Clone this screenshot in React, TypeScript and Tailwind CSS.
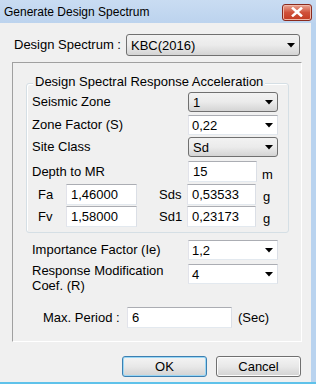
import React from 'react';

function Arrow() {
  return (
    <svg width="8" height="5" viewBox="0 0 8 5" className="shrink-0">
      <polygon points="0,0 8,0 4,4.5" fill="#000" />
    </svg>
  );
}

// gray "drop-down list" style combo
function ListCombo({ value, className }: { value: string; className: string }) {
  return (
    <div
      className={`flex items-center justify-between rounded-[3px] border border-[#707070] bg-gradient-to-b from-[#f2f2f2] via-[#ebebeb] to-[#d4d4d4] pl-[4px] pr-[4px] ${className}`}
    >
      <span className="leading-none">{value}</span>
      <Arrow />
    </div>
  );
}

// white editable combo
function EditCombo({ value }: { value: string }) {
  return (
    <div className="flex h-[20px] w-[90px] shrink-0 items-center justify-between border border-[#abadb3] border-b-[#e3e9ef] border-l-[#e2e3ea] border-r-[#dbdfe6] bg-white pl-[3px] pr-[4px]">
      <span className="leading-none">{value}</span>
      <Arrow />
    </div>
  );
}

function TextBox({ value, className }: { value: string; className: string }) {
  return (
    <div
      className={`flex h-[21px] items-center border border-[#abadb3] border-b-[#e3e9ef] border-l-[#e2e3ea] border-r-[#dbdfe6] bg-white pl-[4px] ${className}`}
    >
      <span className="leading-none">{value}</span>
    </div>
  );
}

function Button({ label, primary }: { label: string; primary?: boolean }) {
  return (
    <div
      className={`flex h-[21px] w-[85px] items-center justify-center rounded-[3px] border bg-gradient-to-b from-[#f4f4f4] via-[#e8e8e8] to-[#d2d2d2] ${
        primary ? 'border-[#3c7fb1] shadow-[inset_0_0_0_1px_#9ad7f5]' : 'border-[#707070] shadow-[inset_0_0_0_1px_#fcfcfc]'
      }`}
    >
      {label}
    </div>
  );
}

export default function App() {
  return (
    <div className="flex h-[384px] w-[316px] flex-col bg-[#b9d3ef] font-['Liberation_Sans',Arial,sans-serif] text-[13px] text-black">
      {/* title bar */}
      <div className="flex h-[23px] shrink-0 items-center justify-between bg-gradient-to-b from-[#c9dcf2] to-[#bcd3ee] pl-[4px] pr-[4px]">
        <span className="text-[12px] leading-none">Generate Design Spectrum</span>
        <div className="mt-[1px] flex h-[17px] w-[30px] items-center justify-center rounded-[3px] border border-[#8a2a1e] bg-gradient-to-b from-[#e8a493] via-[#d0513a] to-[#c33a20] shadow-[inset_0_0_0_1px_#f0b8a8]">
          <svg width="12" height="10" viewBox="0 0 12 10">
            <path d="M2 1.5 L10 8.5 M10 1.5 L2 8.5" stroke="#ffffff" strokeWidth="2.6" strokeLinecap="square" />
          </svg>
        </div>
      </div>

      <div className="flex flex-1 flex-col">
        <div className="flex h-[359px] w-[311px] flex-col bg-[#f0f0f0]">
          {/* design spectrum */}
          <div className="ml-[14px] mt-[11px] flex items-center">
            <span className="w-[112px]">Design Spectrum :</span>
            <ListCombo value="KBC(2016)" className="h-[22px] w-[174px]" />
          </div>

          {/* outer panel */}
          <div className="ml-[12px] mt-[6px] flex h-[280px] w-[290px] flex-col border border-b-white border-l-[#a0a0a0] border-r-white border-t-[#a0a0a0]">
            {/* group box */}
            <div className="relative ml-[13px] mt-[20px] flex h-[150px] w-[263px] flex-col rounded-[3px] border border-[#d5dfe5] pl-[5px] shadow-[inset_1px_1px_0_#ffffff]">
              <span className="absolute left-[6px] top-[-9px] bg-[#f0f0f0] px-[2px] leading-none">
                Design Spectral Response Acceleration
              </span>
              <div className="mt-[8px] flex h-[20px] items-center">
                <span className="w-[156px]">Seismic Zone</span>
                <ListCombo value="1" className="h-[20px] w-[90px]" />
              </div>
              <div className="mt-[3px] flex h-[20px] items-center">
                <span className="w-[156px]">Zone Factor (S)</span>
                <EditCombo value="0,22" />
              </div>
              <div className="mt-[2px] flex h-[20px] items-center">
                <span className="w-[156px]">Site Class</span>
                <ListCombo value="Sd" className="h-[20px] w-[90px]" />
              </div>
              <div className="mt-[4px] flex h-[21px] items-center">
                <span className="w-[156px]">Depth to MR</span>
                <TextBox value="15" className="w-[69px]" />
                <span className="ml-[5px] mt-[6px]">m</span>
              </div>
              <div className="mt-[2px] flex h-[21px] items-center">
                <span className="ml-[6px] w-[28px]">Fa</span>
                <TextBox value="1,46000" className="w-[71px]" />
                <span className="ml-[22px] w-[28px]">Sds</span>
                <TextBox value="0,53533" className="w-[69px]" />
                <span className="ml-[7px] mt-[4px]">g</span>
              </div>
              <div className="mt-[1px] flex h-[21px] items-center">
                <span className="ml-[6px] w-[28px]">Fv</span>
                <TextBox value="1,58000" className="w-[71px]" />
                <span className="ml-[22px] w-[28px]">Sd1</span>
                <TextBox value="0,23173" className="w-[69px]" />
                <span className="ml-[7px] mt-[4px]">g</span>
              </div>
            </div>

            <div className="ml-[19px] mt-[7px] flex h-[20px] items-center">
              <span className="w-[156px]">Importance Factor (Ie)</span>
              <EditCombo value="1,2" />
            </div>
            <div className="ml-[19px] mt-[4px] flex h-[20px] items-start">
              <span className="mt-[-1px] w-[156px] leading-[15px]">
                Response Modification
                <br />
                Coef. (R)
              </span>
              <EditCombo value="4" />
            </div>

            <div className="ml-[30px] mt-[23px] flex items-center">
              <span className="w-[84px]">Max. Period :</span>
              <TextBox value="6" className="w-[105px]" />
              <span className="ml-[6px]">(Sec)</span>
            </div>
          </div>

          {/* buttons */}
          <div className="ml-[122px] mt-[14px] flex gap-[9px]">
            <Button label="OK" primary />
            <Button label="Cancel" />
          </div>
        </div>
        <div className="h-[2px] w-full bg-[#5fc2ea]" />
      </div>
    </div>
  );
}
